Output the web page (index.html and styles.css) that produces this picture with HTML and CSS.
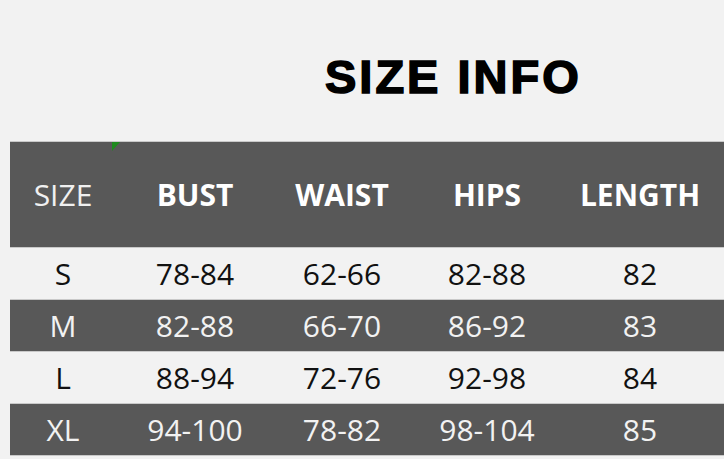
FILE: index.html
```html
<!DOCTYPE html>
<html>
<head>
<meta charset="utf-8">
<link rel="stylesheet" href="styles.css">
</head>
<body>
<div class="page">
  <h1 class="title">SIZE INFO</h1>
  <div class="table">
    <span class="mark"></span>
    <div class="row head">
      <div class="cell plain">SIZE</div>
      <div class="cell">BUST</div>
      <div class="cell">WAIST</div>
      <div class="cell">HIPS</div>
      <div class="cell">LENGTH</div>
    </div>
    <div class="row light">
      <div class="cell">S</div><div class="cell">78-84</div><div class="cell">62-66</div><div class="cell">82-88</div><div class="cell">82</div>
    </div>
    <div class="row dark">
      <div class="cell">M</div><div class="cell">82-88</div><div class="cell">66-70</div><div class="cell">86-92</div><div class="cell">83</div>
    </div>
    <div class="row light">
      <div class="cell">L</div><div class="cell">88-94</div><div class="cell">72-76</div><div class="cell">92-98</div><div class="cell">84</div>
    </div>
    <div class="row dark">
      <div class="cell">XL</div><div class="cell">94-100</div><div class="cell">78-82</div><div class="cell">98-104</div><div class="cell">85</div>
    </div>
  </div>
</div>
</body>
</html>
```
FILE: styles.css
```css
html, body {
  margin: 0;
  padding: 0;
  background: #f2f2f2;
  overflow: hidden;
}
.page {
  width: 724px;
  height: 459px;
  padding-top: 52px;
  box-sizing: border-box;
}
.title {
  margin: 0 0 0 325px;
  font-family: "Liberation Sans", Arial, sans-serif;
  font-weight: 700;
  font-size: 47px;
  line-height: 50px;
  letter-spacing: 3px;
  -webkit-text-stroke: 1.6px #000;
  color: #000;
  height: 89px;
}
.table {
  position: relative;
  margin-left: 10px;
  border-top: 1px solid #c9c9c9;
  font-family: "Open Sans", sans-serif;
}
.row {
  display: grid;
  grid-template-columns: 106px 158px 136px 154px 152px;
  align-items: center;
  font-size: 30px;
}
.cell {
  text-align: center;
}
.head {
  height: 105px;
  background: #585858;
  color: #fff;
  font-weight: 700;
  border-bottom: 1px solid #c9c9c9;
}
.head .plain {
  font-weight: 400;
  color: #f0f0f0;
}
.light {
  height: 51px;
  color: #111;
  background: #f2f2f2;
  border-bottom: 1px solid #c9c9c9;
}
.dark {
  height: 51px;
  background: #585858;
  color: #f2f2f2;
  border-bottom: 1px solid #c9c9c9;
}
.mark {
  position: absolute;
  left: 102px;
  top: 0;
  width: 0;
  height: 0;
  border-top: 9px solid #1e8a1e;
  border-right: 8px solid transparent;
}
```
